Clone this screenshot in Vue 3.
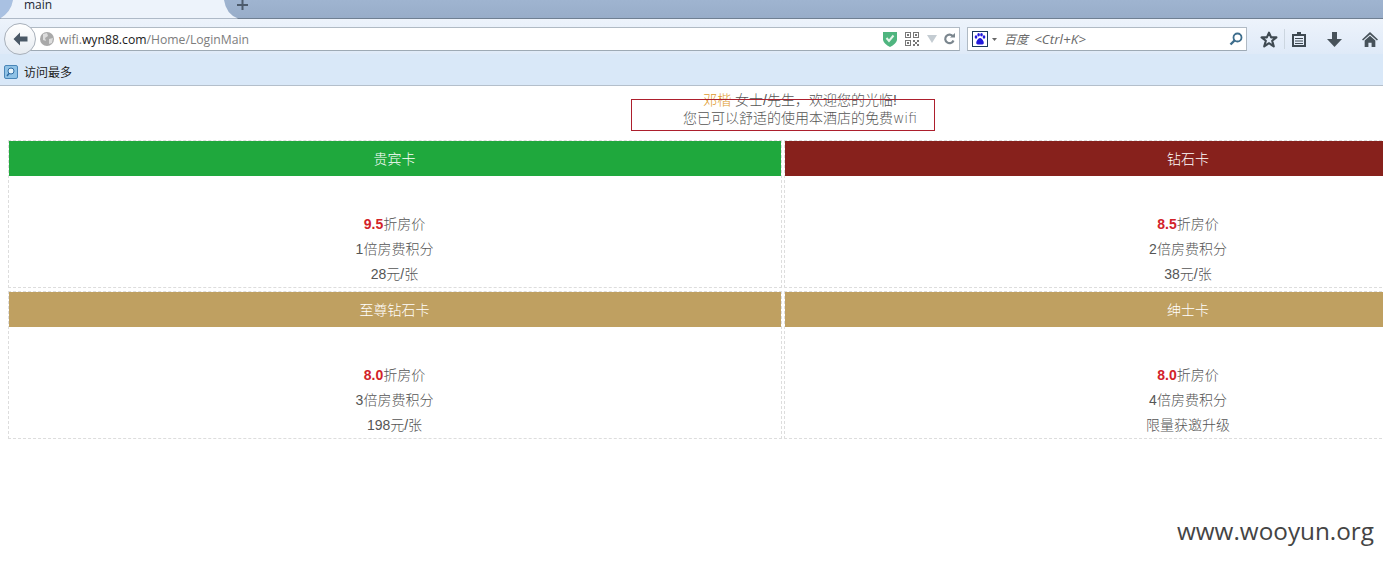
<script setup>
const cards = [
  { name: '贵宾卡', color: '#1fa83d', rate: '9.5', points: '1倍房费积分', price: '28元/张' },
  { name: '钻石卡', color: '#87211c', rate: '8.5', points: '2倍房费积分', price: '38元/张' },
  { name: '至尊钻石卡', color: '#bfa061', rate: '8.0', points: '3倍房费积分', price: '198元/张' },
  { name: '绅士卡', color: '#bfa061', rate: '8.0', points: '4倍房费积分', price: '限量获邀升级' }
]
</script>

<template>
  <div class="page">
    <header class="chrome">
      <div class="tabstrip">
        <svg class="tab-shape" width="246" height="19" viewBox="0 0 246 19">
          <path d="M0 0H15Q13 12 2 18.5H0Z" fill="#a9c1e2" />
          <path d="M15 0H226Q228 14 240 18.5H2Q13 12 15 0Z" fill="#edf3fb" />
        </svg>
        <span class="tab-title">main</span>
        <svg class="tab-plus" width="11" height="10" viewBox="0 0 11 10"><path d="M4.500 0H6.500V4H11V6H6.500V10H4.500V6H0V4H4.500Z" fill="#4d5b6c" /></svg>
      </div>
      <div class="navbar">
        <button class="back" aria-label="back">
          <svg width="15" height="14" viewBox="0 0 15 14"><path d="M7 0.500L0.500 7L7 13.500V9.500H14.500V4.500H7Z" fill="#4a5866" /></svg>
        </button>
        <div class="urlbar">
          <svg class="globe" width="14" height="14" viewBox="0 0 14 14">
            <circle cx="7" cy="7" r="7" fill="#a9a9a9" />
            <path d="M3 2L7 1L8 4L5 6L6 9L3 8ZM9 7L13 6L12 11L9 12Z" fill="#dcdcdc" />
          </svg>
          <span class="url"><span class="dim">wifi.</span>wyn88.com<span class="dim">/Home/LoginMain</span></span>
          <svg class="shield" width="14" height="16" viewBox="0 0 14 16">
            <path d="M0 1H14V9Q13 13 7 16Q1 13 0 9Z" fill="#4fb57f" />
            <path d="M3.500 7L6 10L10.500 4.500" fill="none" stroke="#e4f5ea" stroke-width="2" />
          </svg>
          <svg class="qr" width="14" height="14" viewBox="0 0 14 14" fill="#777">
            <path d="M0 0H6V6H0ZM1 1V5H5V1ZM8 0H14V6H8ZM9 1V5H13V1ZM0 8H6V14H0ZM1 9V13H5V9Z" fill-rule="evenodd" />
            <path d="M2 2H4V4H2ZM10 2H12V4H10ZM2 10H4V12H2ZM8 8H10V10H8ZM12 8H14V10H12ZM10 10H12V12H10ZM8 12H10V14H8ZM12 12H14V14H12Z" />
          </svg>
          <svg class="tri" width="10" height="8" viewBox="0 0 10 8"><path d="M0 0H10L5 8Z" fill="#c4ccd2" /></svg>
          <svg class="reload" width="12" height="12" viewBox="0 0 12 12">
            <path d="M10 3.300A4.300 4.300 0 1 0 10.500 7.500" fill="none" stroke="#7b868e" stroke-width="2.200" />
            <path d="M7 4.500H12V0Z" fill="#7b868e" />
          </svg>
        </div>
        <div class="searchbar">
          <span class="engine">
            <svg width="14" height="14" viewBox="0 0 14 14" fill="#2319dc">
              <ellipse cx="3" cy="5" rx="1.300" ry="1.800" />
              <ellipse cx="5.600" cy="2.800" rx="1.300" ry="1.800" />
              <ellipse cx="8.500" cy="2.800" rx="1.300" ry="1.800" />
              <ellipse cx="11" cy="5" rx="1.300" ry="1.800" />
              <path d="M7 6Q9 6 10.500 9.500Q11.500 12.500 9 12.500H5Q2.500 12.500 3.500 9.500Q5 6 7 6Z" />
            </svg>
          </span>
          <svg class="caret" width="5" height="3" viewBox="0 0 5 3"><path d="M0 0H5L2.500 3Z" fill="#666" /></svg>
          <span class="placeholder">百度 <span class="hint">&lt;Ctrl+K&gt;</span></span>
          <svg class="lens" width="14" height="14" viewBox="0 0 14 14">
            <circle cx="8.500" cy="5.500" r="4" fill="none" stroke="#3d6d8c" stroke-width="1.800" />
            <path d="M5.500 8.500L1.500 12.500" stroke="#3d6d8c" stroke-width="2.400" />
          </svg>
        </div>
        <div class="tools">
          <svg class="star" width="18" height="17" viewBox="0 0 17 16"><path d="M8.500 1.500L10.500 6H15.500L11.500 9.200L13 14.500L8.500 11.500L4 14.500L5.500 9.200L1.500 6H6.500Z" fill="none" stroke="#3f4a52" stroke-width="2" stroke-linejoin="round" /></svg>
          <span class="sep"></span>
          <svg class="clip" width="14" height="15" viewBox="0 0 14 15">
            <path d="M1 3H13V14H1Z" fill="none" stroke="#3f4a52" stroke-width="2" />
            <path d="M5 0H9V3H5ZM3 6H11V7H3ZM3 8.500H11V9.500H3ZM3 11H11V12H3Z" fill="#3f4a52" />
          </svg>
          <svg class="down" width="15" height="15" viewBox="0 0 15 15"><path d="M5 0H10V7H15L7.500 15L0 7H5Z" fill="#47525a" /></svg>
          <svg class="home" width="16" height="15" viewBox="0 0 15 14">
            <path d="M7.500 0L15 7L14 8L7.500 2.200L1 8L0 7Z" fill="#47525a" />
            <path d="M2.500 8L7.500 3.500L12.500 8V14H9V10H6V14H2.500Z" fill="#47525a" />
          </svg>
        </div>
      </div>
      <div class="bookmarks">
        <svg width="14" height="14" viewBox="0 0 14 14">
          <rect x="0.500" y="0.500" width="13" height="13" rx="1.500" fill="#8fc2e6" stroke="#4a86b8" />
          <circle cx="7" cy="6" r="3" fill="#e8f4fb" stroke="#2f6ca3" />
          <path d="M5 8.500L3 11" stroke="#2f6ca3" stroke-width="1.500" />
        </svg>
        <span>访问最多</span>
      </div>
    </header>

    <main class="content">
      <div class="welcome">
        <div class="line-one"><span class="guest">邓楷</span> 女士/先生，欢迎您的光临!</div>
        <div class="line-two">您已可以舒适的使用本酒店的免费<span class="wifi">wifi</span></div>
        <div class="red-box"></div>
      </div>
      <div class="cards">
        <section v-for="card in cards" :key="card.name" class="card">
          <h2 class="card-title" :style="{ backgroundColor: card.color }">{{ card.name }}</h2>
          <p><b>{{ card.rate }}</b>折房价</p>
          <p>{{ card.points }}</p>
          <p>{{ card.price }}</p>
        </section>
      </div>
    </main>
    <div class="watermark">www.wooyun.org</div>
  </div>
</template>

<style>
html, body { margin: 0; overflow: hidden; background: #fff; }
</style>

<style scoped>
.page {
  position: relative;
  width: 1383px;
  height: 561px;
  overflow: hidden;
  font-family: "Liberation Sans", "Noto Sans CJK SC", sans-serif;
  background: #fff;
}
.chrome {
  font-family: "Open Sans", "Noto Sans CJK SC", sans-serif;
  border-bottom: 1px solid #b4bfcb;
}
.tabstrip {
  position: relative;
  display: flex;
  height: 18px;
  border-bottom: 1px solid #6f7f92;
  background: linear-gradient(#9fb4d0, #98adc9);
  box-sizing: content-box;
}
.tab-shape { position: absolute; left: -2px; top: 0; }
.tab-title {
  position: relative;
  margin-left: 24px;
  margin-top: -4px;
  font-size: 12px;
  line-height: 18px;
  color: #1c2733;
}
.tab-plus {
  position: absolute;
  left: 237px;
  top: 0;
}
.navbar {
  display: flex;
  align-items: center;
  height: 35px;
  padding-top: 5px;
  padding-left: 4px;
  box-sizing: border-box;
  background: linear-gradient(#edf3fb, #dfeaf8);
}
.back {
  display: flex;
  position: relative;
  z-index: 1;
  flex: none;
  align-items: center;
  justify-content: center;
  width: 32px;
  height: 32px;
  padding: 0;
  border: 1px solid #a8b0ba;
  border-radius: 50%;
  background: linear-gradient(#fff, #e6ebf1);
}
.urlbar {
  display: flex;
  align-items: center;
  width: 930px;
  height: 24px;
  margin-left: -6px;
  padding-left: 9px;
  box-sizing: border-box;
  border: 1px solid #b0bac4;
  border-bottom-color: #9eaab5;
  background: #fff;
}
.globe { flex: none; }
.url {
  flex: 1;
  margin-left: 5px;
  font-family: "Open Sans", sans-serif;
  font-size: 12.200px;
  color: #1a1a1a;
}
.dim { color: #7d7d7d; }
.shield { margin-right: 8px; }
.qr { margin-right: 8px; }
.tri { margin-right: 6px; }
.reload { margin-right: 4px; }
.searchbar {
  display: flex;
  align-items: center;
  width: 280px;
  height: 24px;
  margin-left: 7px;
  padding: 0 3px 0 4px;
  box-sizing: border-box;
  border: 1px solid #b0bac4;
  border-bottom-color: #9eaab5;
  background: #fff;
}
.engine {
  display: flex;
  flex: none;
  align-items: center;
  justify-content: center;
  width: 16px;
  height: 16px;
  box-sizing: border-box;
  border: 1px solid #1c3a5c;
  background: #fff;
}
.caret { margin-left: 4px; flex: none; }
.placeholder {
  flex: 1;
  margin-left: 7px;
  font-size: 12px;
  font-style: italic;
  color: #6a6a6a;
}
.hint {
  margin-left: 3px;
  font-size: 13.500px;
}
.tools {
  display: flex;
  align-items: center;
  margin-left: 13px;
}
.sep {
  width: 1px;
  height: 20px;
  margin: 0 7px 0 6px;
  background: #ccd6e0;
}
.clip { margin-right: 21px; }
.down { margin-right: 20px; }
.bookmarks {
  display: flex;
  align-items: center;
  gap: 6px;
  height: 31px;
  padding-top: 4px;
  padding-left: 4px;
  box-sizing: border-box;
  background: #d9e8f8;
  font-size: 12px;
  color: #222;
}
.content { color: #555; font-size: 14px; font-weight: 300; }
.welcome {
  position: relative;
  height: 54px;
  padding: 5px 0 0 217px;
  box-sizing: border-box;
  text-align: center;
  line-height: 18px;
}
.guest { color: #e09a2c; }
.wifi { font-family: "DejaVu Sans", sans-serif; }
.red-box {
  position: absolute;
  left: 631px;
  top: 13px;
  width: 302px;
  height: 30px;
  border: 1px solid #ad1f2d;
}
.cards {
  display: grid;
  grid-template-columns: 776px 808px;
  grid-auto-rows: 151px;
  align-items: start;
  width: 1584px;
  margin-left: 8px;
}
.card {
  border: 1px dashed #ddd;
  text-align: center;
}
.card-title {
  height: 35px;
  margin: 0 0 36px;
  color: #fff;
  font-size: 14px;
  font-weight: 300;
  line-height: 36px;
}
.card p {
  margin: 0;
  height: 25px;
  line-height: 25px;
}
.card b { color: #d2232a; font-weight: 700; }
.card:nth-child(odd) { margin-right: 2px; }
.card:nth-child(odd) p, .card:nth-child(odd) .card-title { padding-right: 1px; }
.watermark {
  position: absolute;
  right: 9px;
  top: 513px;
  font-family: "Open Sans", sans-serif;
  font-size: 24.300px;
  line-height: 36px;
  color: #444;
}
</style>
